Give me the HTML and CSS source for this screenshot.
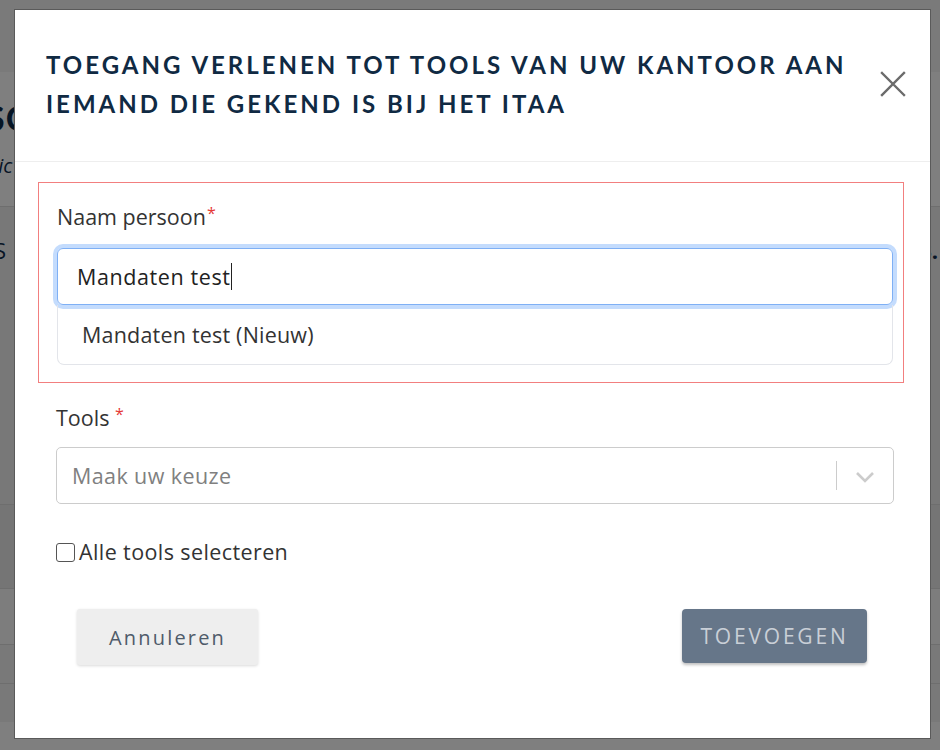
FILE: index.html
```html
<!DOCTYPE html>
<html lang="nl">
<head>
<meta charset="utf-8">
<title>Toegang verlenen</title>
<link rel="stylesheet" href="styles.css">
</head>
<body>
<div class="page">
  <div class="page-header"></div>
  <div class="page-content">
    <h1 class="page-title">SC</h1>
    <p class="page-sub">Klic</p>
    <div class="page-row page-row-first"><span class="row-left">S</span><span class="row-right">3.</span></div>
    <div class="page-row page-row-grey"></div>
    <div class="page-row page-row-mid"></div>
    <div class="page-row page-row-grey page-row-small"></div>
    <div class="page-row page-row-small"></div>
  </div>
</div>

<div class="backdrop">
  <div class="modal">
    <div class="modal-header">
      <h2 class="modal-title">Toegang verlenen tot tools van uw kantoor aan iemand die gekend is bij het ITAA</h2>
      <button class="close-btn" aria-label="Sluiten">
        <svg width="26" height="26" viewBox="0 0 26 26"><path d="M2 2 L24 24 M24 2 L2 24" stroke="#6b6b6b" stroke-width="2.4" stroke-linecap="square" fill="none"/></svg>
      </button>
    </div>
    <div class="modal-body">
      <div class="person-box">
        <div class="field-label">Naam persoon<span class="req req-tight">*</span></div>
        <div class="text-input focused"><span>Mandaten test</span><span class="caret"></span></div>
        <div class="suggest-list">
          <div class="suggest-item">Mandaten test (Nieuw)</div>
        </div>
      </div>

      <div class="tools-field">
        <div class="field-label">Tools <span class="req">*</span></div>
        <div class="select">
          <span class="placeholder">Maak uw keuze</span>
          <span class="select-indicators">
            <span class="sep"></span>
            <svg class="chevron" width="20" height="12" viewBox="0 0 20 12"><polyline points="2,2 10,10 18,2" stroke="#cccccc" stroke-width="2.6" fill="none"/></svg>
          </span>
        </div>
      </div>

      <label class="check-row"><span class="checkbox"></span>Alle tools selecteren</label>

      <div class="actions">
        <button class="btn btn-cancel">Annuleren</button>
        <button class="btn btn-add">TOEVOEGEN</button>
      </div>
    </div>
  </div>
</div>
</body>
</html>
```
FILE: styles.css
```css
* { box-sizing: border-box; }

html, body {
  margin: 0;
  height: 100%;
}

body {
  font-family: "Open Sans", "Lato", sans-serif;
  background: #ffffff;
  color: #333333;
  overflow: hidden;
}

/* ---------- underlying page ---------- */
.page {
  margin-left: -14px;
}

.page-header {
  height: 72px;
  background: #f4f4f4;
}

.page-content {
  background: #ffffff;
}

.page-title {
  margin: 0;
  padding: 24px 0 0 0;
  font-family: "Lato", sans-serif;
  font-size: 34px;
  font-weight: 700;
  color: #0d2a4a;
  line-height: 44px;
  letter-spacing: 1px;
}

.page-sub {
  margin: 0;
  padding: 12px 0 0 0;
  font-style: italic;
  font-size: 20px;
  line-height: 28px;
  height: 66px;
  color: #0d2a4a;
  margin-left: -4px;
}

.page-row {
  display: flex;
  justify-content: space-between;
  border-top: 1px solid #dddddd;
  background: #f0f0f0;
  height: 84px;
}

.page-row-first {
  height: 298px;
  padding-top: 28px;
  align-items: flex-start;
  font-size: 22px;
  color: #0d2a4a;
}

.row-left { padding-left: 8px; }
.row-right { font-weight: 700; padding-right: 2px; }

.page-row-grey { background: #ebebeb; height: 84px; }
.page-row-mid { background: #fafafa; height: 56px; }
.page-row-small { height: 39px; background: #f2f2f2; }

/* ---------- backdrop + modal ---------- */
.backdrop {
  position: fixed;
  inset: 0;
  background: rgba(0, 0, 0, 0.5);
  display: flex;
  align-items: flex-start;
  padding: 9px 0 0 14px;
}

.modal {
  width: 917px;
  height: 730px;
  background: #ffffff;
  border: 1px solid #5a5a5a;
  display: flex;
  flex-direction: column;
}

.modal-header {
  display: flex;
  align-items: center;
  justify-content: space-between;
  padding: 35px 24px 38px 31px;
  border-bottom: 1px solid #eeeeee;
}

.modal-title {
  margin: 0;
  font-family: "Lato", sans-serif;
  font-size: 24px;
  font-weight: 700;
  line-height: 39px;
  letter-spacing: 3px;
  text-transform: uppercase;
  color: #102a43;
  max-width: 820px;
}

.close-btn {
  background: none;
  border: none;
  padding: 0;
  width: 26px;
  height: 26px;
  cursor: pointer;
  display: flex;
}

.modal-body {
  padding: 20px 26px 0 23px;
}

.person-box {
  border: 1px solid #f27f7f;
  padding: 20px 10px 17px 18px;
}

.field-label {
  font-size: 21.5px;
  letter-spacing: 0;
  line-height: 28px;
  color: #333333;
}

.req {
  color: #e53935;
  font-size: 16px;
  vertical-align: top;
  line-height: 20px;
}

.req-tight { margin-left: 1px; }

.text-input {
  margin-top: 17px;
  height: 57px;
  border: 1px solid #7fb0f5;
  border-radius: 6px;
  box-shadow: 0 0 0 4px #c4dcfd;
  display: flex;
  align-items: center;
  padding-left: 19px;
  font-size: 21.5px;
  letter-spacing: 0.6px;
  color: #222222;
}

.caret {
  display: inline-block;
  width: 1.5px;
  height: 27px;
  background: #222222;
  margin-left: 0;
}

.suggest-list {
  border: 1px solid #e3e5ea;
  border-top: none;
  border-radius: 0 0 7px 7px;
  height: 60px;
  display: flex;
  align-items: center;
}

.suggest-item {
  padding-left: 24px;
  font-size: 21.5px;
  letter-spacing: 0.2px;
  color: #333333;
}

.tools-field {
  padding: 21px 10px 0 18px;
}

.select {
  margin-top: 15px;
  height: 57px;
  border: 1px solid #cccccc;
  border-radius: 5px;
  display: flex;
  align-items: center;
  justify-content: space-between;
  padding-left: 15px;
}

.placeholder {
  font-size: 21.5px;
  letter-spacing: 0.4px;
  color: #808080;
}

.select-indicators {
  display: flex;
  align-items: center;
  height: 100%;
}

.sep {
  width: 1px;
  height: 29px;
  background: #cccccc;
}

.chevron {
  margin: 2px 18px 0 18px;
}

.check-row {
  display: flex;
  align-items: center;
  gap: 4px;
  margin: 36px 0 0 18px;
  font-size: 21.5px;
  letter-spacing: 0.4px;
  color: #333333;
  line-height: 24px;
}

.checkbox {
  width: 19px;
  height: 19px;
  border: 1.5px solid #555555;
  border-radius: 3px;
  background: #ffffff;
}

.actions {
  display: flex;
  justify-content: space-between;
  margin: 45px 37px 0 39px;
}

.btn {
  font-family: "Open Sans", "Lato", sans-serif;
  font-size: 20px;
  border: none;
  cursor: pointer;
}

.btn-cancel {
  width: 181px;
  height: 56px;
  background: #eeeeee;
  color: #4f5b6a;
  letter-spacing: 2.2px;
  border-radius: 3px;
  box-shadow: 0 1px 3px rgba(0, 0, 0, 0.15);
}

.btn-add {
  width: 185px;
  height: 54px;
  background: #667689;
  color: #c9cfd7;
  font-size: 21px;
  letter-spacing: 2.8px;
  border-radius: 4px;
  box-shadow: 0 2px 3px rgba(0, 0, 0, 0.25);
}
```
